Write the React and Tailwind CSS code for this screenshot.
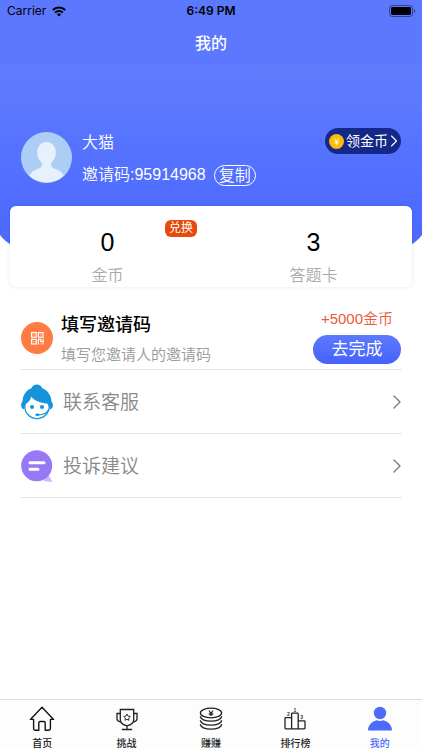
import { ChevronRight } from "lucide-react";

const StatusBar = () => (
  <div className="relative flex h-[22px] items-center justify-between pl-[7px] pr-1.5 font-['Inter',sans-serif] text-black">
    <div className="flex items-center gap-1.5">
      <span className="text-xs">Carrier</span>
      <svg className="h-[11px] w-[14px]" viewBox="0 0 14 11">
        <path d="M0.8 4.1a8.8 8.8 0 0 1 12.4 0" fill="none" stroke="currentColor" strokeWidth="2.1" />
        <path d="M3.1 6.6a5.5 5.5 0 0 1 7.8 0" fill="none" stroke="currentColor" strokeWidth="1.9" />
        <path d="M4.9 8.4a3 3 0 0 1 4.2 0L7 10.6z" fill="currentColor" />
      </svg>
    </div>
    <span className="absolute inset-x-0 text-center text-xs font-semibold">6:49 PM</span>
    <svg className="h-3 w-[27px]" viewBox="0 0 27 12">
      <rect x="0.5" y="0.5" width="23" height="11" rx="2.8" fill="none" stroke="#000" strokeOpacity="0.45" />
      <rect x="2" y="2" width="20" height="8" rx="1.4" />
      <path d="M25 4v4c1.6-.6 1.6-3.4 0-4z" fillOpacity="0.45" />
    </svg>
  </div>
);

const AvatarIcon = () => (
  <svg className="size-[51px] shrink-0" viewBox="0 0 51 51">
    <circle cx="25.5" cy="25.5" r="25.5" fill="#accdf4" />
    <path
      d="M25.5 10c-5.6 0-9.3 4.3-9.3 10.4 0 4.6 1.8 8.4 4.6 10.4v2.8c0 1.6-1.6 2.4-4.2 3.4-3.7 1.4-7 3.3-8.4 6.7a25.5 25.5 0 0 0 34.6 0c-1.4-3.4-4.7-5.3-8.4-6.7-2.6-1-4.2-1.8-4.2-3.4v-2.8c2.8-2 4.6-5.8 4.6-10.4C34.8 14.3 31.1 10 25.5 10z"
      fill="#e6f1fd"
    />
  </svg>
);

const CoinIcon = () => (
  <svg className="size-[15px] shrink-0" viewBox="0 0 15 15">
    <circle cx="7.5" cy="7.5" r="7.5" fill="#fdbc06" />
    <path d="M5.2 4.2 7.5 7.3l2.3-3.1M7.5 7.3v3.9M5.5 7.6h4M5.5 9.2h4" fill="none" stroke="#fff" strokeWidth="0.9" />
  </svg>
);

const QrIcon = () => (
  <svg className="size-8" viewBox="0 0 32 32">
    <circle cx="16" cy="16" r="16" fill="#ff7b41" />
    <g fill="none" stroke="#fff" strokeWidth="1.2">
      <rect x="10.6" y="10.6" width="4.6" height="4.6" />
      <rect x="17.4" y="10.6" width="4.6" height="4.6" />
      <rect x="10.6" y="17.4" width="4.6" height="4.6" />
      <path d="M17.4 22.6v-5.2h2.4v2.2h2.4v-2.8M19.6 22h1M22 20.8v1.8" />
    </g>
    <g fill="#fff">
      <rect x="12.4" y="12.4" width="1" height="1" />
      <rect x="19.2" y="12.4" width="1" height="1" />
      <rect x="12.4" y="19.2" width="1" height="1" />
    </g>
  </svg>
);

const ServiceIcon = () => (
  <svg className="h-9 w-8" viewBox="0 0 32 36">
    <circle cx="16" cy="22.4" r="12.2" fill="#fff" stroke="#1594db" strokeWidth="1.3" />
    <path
      d="M10.4 4.2C11.4 1.8 13.2.6 15.8.6s4.4 1.2 5.4 3.6c5.2 1.9 9 6.8 9.4 13.6 1 .9 1.4 2 1.3 3.6-.1 2-1 3.3-2.8 3.8-.3-2.3-1.4-4.3-3.1-5.8-6.600-.2-12.400-2.600-15.800-6.600-.8 3.400-2.700 5.400-5.300 7.200-1 1.600-1.700 3.200-2 5.200C1.200 24.700.2 23.400.1 21.400c-.1-1.600.3-2.700 1.300-3.600.4-6.800 3.800-11.700 9-13.600z"
      fill="#1594db"
    />
    <circle cx="11" cy="23" r="2.1" fill="#1594db" />
    <circle cx="21" cy="23" r="2.1" fill="#1594db" />
    <path d="M27.8 25.4c-1.6 3.4-5.6 5.2-11 5.4" fill="none" stroke="#1594db" strokeWidth="1.2" />
    <ellipse cx="16.4" cy="30.8" rx="2.2" ry="1.3" fill="#1594db" />
  </svg>
);

const FeedbackIcon = () => (
  <svg className="size-8" viewBox="0 0 32 32">
    <path d="M27 24l4.6 8-9-1z" fill="#cbb9fa" />
    <circle cx="15.7" cy="15.8" r="15.5" fill="#9879f5" />
    <path d="M9 12.7h14M9 19.2h8" stroke="#fff" strokeWidth="3" strokeLinecap="round" />
  </svg>
);

const HomeIcon = () => (
  <svg className="h-[26px] w-7" viewBox="0 0 28 26" fill="none" stroke="#151515" strokeWidth="1.4" strokeLinejoin="round">
    <path d="M14 1.3 2.4 13.4h3.2v9.2c0 1.2.5 1.7 1.7 1.7h3.5v-7.5c0-.9.4-1.3 1.3-1.3h3.8c.9 0 1.3.4 1.3 1.3v7.5h3.5c1.2 0 1.7-.5 1.7-1.7v-9.2h3.2z" />
  </svg>
);

const TrophyIcon = () => (
  <svg className="h-[26px] w-7" viewBox="0 0 28 26" fill="none" stroke="#222" strokeWidth="1.3">
    <path d="M7.3 3.5h13.4v10.2c0 3.2-3 5.2-6.7 6.2-3.7-1-6.7-3-6.7-6.2zM14 19.9v3.5M8.8 23.5h10.4" />
    <path d="M7.3 7.5H4v5.5c0 1.7 1.6 2.5 3.8 3M20.7 7.5H24v5.5c0 1.7-1.6 2.5-3.8 3" />
    <path d="M14 8l1 2.1 2.3.3-1.7 1.6.4 2.3-2-1.1-2 1.1.4-2.3-1.7-1.6 2.3-.3z" strokeWidth="0.9" />
  </svg>
);

const CoinsIcon = () => (
  <svg className="h-[26px] w-7" viewBox="0 0 28 26" fill="none" stroke="#222" strokeWidth="1.3">
    <ellipse cx="14" cy="7" rx="10.6" ry="4.8" />
    <path d="M11.8 4.5 14 7l2.2-2.500M14 7v3M11.800 7.300h4.400M11.800 8.700h4.400" strokeWidth="1.1" />
    <path d="M3.4 10.3c0 2.8 4.6 4.9 10.6 4.9s10.6-2.1 10.6-4.9" />
    <path d="M3.4 14.3c0 2.8 4.6 4.9 10.6 4.9s10.6-2.1 10.6-4.9" />
    <path d="M3.4 18.3c0 2.8 4.6 4.9 10.6 4.9s10.6-2.1 10.6-4.9" />
  </svg>
);

const RankIcon = () => (
  <svg className="h-[26px] w-7" viewBox="0 0 28 26">
    <path
      d="M10.6 22.8V8c0-.5.3-.8.8-.8h5c.5 0 .8.3.8.8v14.8M10.6 11.7H4.8c-.5 0-.8.3-.8.8v9.5c0 .5.3.8.8.8h18.4c.5 0 .8-.3.8-.8v-6.3c0-.5-.3-.8-.8-.8h-6"
      fill="none"
      stroke="#222"
      strokeWidth="1.3"
    />
    <g fill="#333" fontSize="5" fontWeight="700" textAnchor="middle">
      <text x="14" y="5.5">1</text>
      <text x="7.3" y="10">2</text>
      <text x="20.7" y="13">3</text>
    </g>
  </svg>
);

const MineIcon = () => (
  <svg className="h-[26px] w-7" viewBox="0 0 28 26" fill="#4d6bfb">
    <circle cx="14" cy="7" r="6.2" />
    <path d="M2 24.5c0-5.4 4-9.2 9-10.3 1.8.9 4.2.9 6 0 5 1.1 9 4.9 9 10.3z" />
  </svg>
);

const tabs = [
  { label: "首页", icon: <HomeIcon /> },
  { label: "挑战", icon: <TrophyIcon /> },
  { label: "赚赚", icon: <CoinsIcon /> },
  { label: "排行榜", icon: <RankIcon /> },
  { label: "我的", icon: <MineIcon />, active: true },
];

const MenuRow = ({ icon, label }) => (
  <a href="#" className="flex h-16 items-center border-b border-[#e6e6e6] px-px text-[#888]">
    {icon}
    <span className="ml-2.5 flex-1 pt-1 text-[19px] font-[350]">{label}</span>
    <ChevronRight className="-mr-2 size-6 text-[#777]" strokeWidth={1.3} />
  </a>
);

const App = () => (
  <div className="flex min-h-screen flex-col bg-white font-['Liberation_Sans','Noto_Sans_CJK_SC',sans-serif]">
    <header className="bg-[#5c78ff]">
      <StatusBar />
      <h1 className="flex h-[43px] items-center justify-center text-base font-medium text-white">我的</h1>
    </header>

    {/* Profile */}
    <section className="relative">
      <svg className="absolute inset-x-0 top-0 h-[220px] w-full" viewBox="0 0 422 220" preserveAspectRatio="none">
        <defs>
          <linearGradient id="profileBg" x1="0" y1="0" x2="0" y2="1">
            <stop offset="0" stopColor="#607dff" />
            <stop offset="0.65" stopColor="#4f6cff" />
            <stop offset="1" stopColor="#4b68ff" />
          </linearGradient>
        </defs>
        <path d="M0 0h422v170Q412 184 380 192Q211 230 42 192Q10 184 0 170z" fill="url(#profileBg)" />
      </svg>

      <div className="relative flex items-start px-[21px] pt-[67px] text-white">
        <AvatarIcon />
        <div className="ml-2.5 flex-1 text-base leading-[22px] font-[350]">
          <p>大猫</p>
          <div className="mt-2.5 flex items-center gap-2">
            <span>邀请码:95914968</span>
            <button type="button" className="h-[21px] rounded-full border border-white px-1 leading-[19px]">
              复制
            </button>
          </div>
        </div>
        <button type="button" className="-mt-1 flex h-[26px] w-[76px] items-center rounded-full bg-[#14288a] pl-1 text-sm">
          <CoinIcon />
          <span className="ml-0.5 shrink-0">领金币</span>
          <ChevronRight className="-ml-1 size-5 shrink-0" strokeWidth={1.3} />
        </button>
      </div>

      {/* Balance */}
      <div className="relative mx-2.5 mt-5 grid h-[81px] grid-cols-2 rounded-md bg-white text-center shadow-[0_0_4px_rgba(0,0,0,0.1)]">
        <div className="relative pt-5">
          <p className="pr-1.5 text-[25px] leading-8">0</p>
          <p className="pr-1.5 text-base leading-9 font-[350] text-[#aaa]">金币</p>
          <button type="button" className="absolute top-3.5 right-3.5 h-[17px] rounded-md bg-[#e64a0c] px-1 text-xs leading-[17px] text-white">
            兑换
          </button>
        </div>
        <div className="pt-5">
          <p className="pl-1 text-[25px] leading-8">3</p>
          <p className="pl-1 text-base leading-9 font-[350] text-[#aaa]">答题卡</p>
        </div>
      </div>
    </section>

    <main className="flex-1 px-5 pt-[19px]">
      <div className="flex h-16 items-center border-b border-[#e6e6e6] px-px">
        <QrIcon />
        <div className="ml-2 flex-1 pt-1">
          <h2 className="text-lg leading-7 font-medium text-black">填写邀请码</h2>
          <p className="mt-0.5 text-[15px] leading-7 font-[350] text-[#999]">填写您邀请人的邀请码</p>
        </div>
        <div className="flex flex-col items-center pb-1">
          <span className="text-[15px] leading-6 font-[350] text-[#ee5a40]">+5000金币</span>
          <button type="button" className="mt-1 h-[29px] w-[88px] rounded-full bg-linear-to-b from-[#5d79ff] to-[#4562fb] text-[17px] text-white">
            去完成
          </button>
        </div>
      </div>
      <MenuRow icon={<ServiceIcon />} label="联系客服" />
      <MenuRow icon={<FeedbackIcon />} label="投诉建议" />
    </main>

    <nav className="grid h-[51px] grid-cols-5 border-t border-[#dcdcdc] bg-[#fdfdfd]">
      {tabs.map((tab) => (
        <a
          key={tab.label}
          href="#"
          className={`flex flex-col items-center pt-1.5 text-[10px] leading-6 font-medium ${tab.active ? "text-[#4d6bfb]" : "text-[#222]"}`}
        >
          {tab.icon}
          {tab.label}
        </a>
      ))}
    </nav>
  </div>
);

export default App;
